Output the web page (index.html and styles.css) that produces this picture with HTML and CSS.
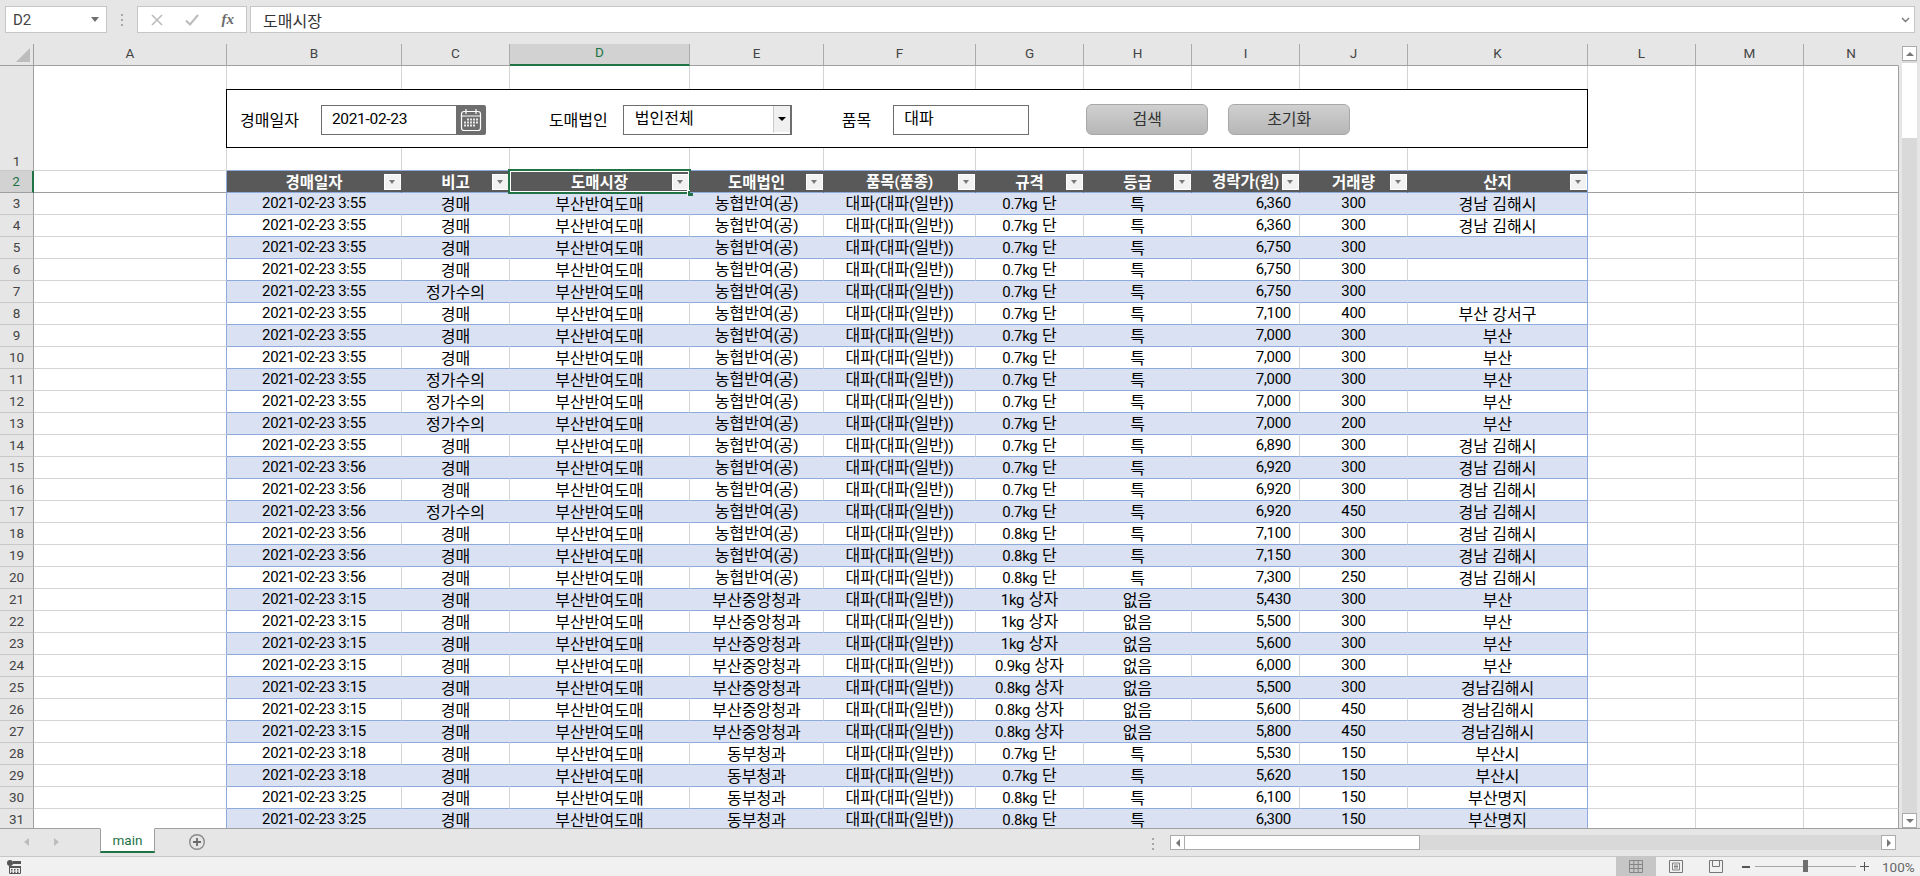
FILE: index.html
```html
<!DOCTYPE html>
<html lang="ko">
<head>
<meta charset="utf-8">
<title>main</title>
<link rel="stylesheet" href="styles.css">
</head>
<body>
<header class="fbar">
  <div class="namebox"><span>D2</span><i class="tri"></i></div>
  <div class="dots"><i></i><i></i><i></i></div>
  <div class="fnbtns">
    <svg class="ic" width="12" height="12" viewBox="0 0 12 12"><path d="M1 1l10 10M11 1L1 11" stroke="#bcbcbc" stroke-width="1.6" fill="none"/></svg>
    <svg class="ic" width="14" height="12" viewBox="0 0 14 12"><path d="M1 6.500l4 4L13 1" stroke="#bcbcbc" stroke-width="2" fill="none"/></svg>
    <span class="fx">fx</span>
  </div>
  <div class="formula"><span>도매시장</span>
    <svg width="9" height="6" viewBox="0 0 9 6"><path d="M1 1l3.500 3.500L8 1" stroke="#777" stroke-width="1.400" fill="none"/></svg>
  </div>
</header>
<main class="main">
  <div class="sheet">
    <table class="grid">
      <colgroup>
        <col class="w34"><col class="w193"><col class="w175"><col class="w108"><col class="w180"><col class="w134"><col class="w152"><col class="w108"><col class="w108"><col class="w108"><col class="w108"><col class="w180"><col class="w108"><col class="w108"><col class="w95">
      </colgroup>
      <thead>
        <tr class="cols">
          <th class="corner"><svg width="14" height="14" viewBox="0 0 14 14"><path d="M14 0v14H0z" fill="#bdbdbd"/></svg></th>
          <th>A</th><th>B</th><th>C</th><th class="cur">D</th><th>E</th><th>F</th><th>G</th><th>H</th><th>I</th><th>J</th><th>K</th><th>L</th><th>M</th><th class="last">N</th>
        </tr>
        <tr class="r1">
          <th class="rh">1</th><td></td><td></td><td></td><td></td><td></td><td></td><td></td><td></td><td></td><td></td><td></td><td></td><td></td><td class="edge"></td>
        </tr>
        <tr class="r2">
          <th class="rh cur">2</th><td class="tl"></td>
          <th class="hd">경매일자<i class="fb"></i></th>
          <th class="hd">비고<i class="fb"></i></th>
          <th class="hd sel">도매시장<i class="fb"></i><i class="selbox"></i><i class="handle"></i></th>
          <th class="hd">도매법인<i class="fb"></i></th>
          <th class="hd">품목<b>(</b>품종<b>)</b><i class="fb"></i></th>
          <th class="hd">규격<i class="fb"></i></th>
          <th class="hd">등급<i class="fb"></i></th>
          <th class="hd">경락가<b>(</b>원<b>)</b><i class="fb"></i></th>
          <th class="hd">거래량<i class="fb"></i></th>
          <th class="hd tr">산지<i class="fb"></i></th>
          <td></td><td></td><td class="edge"></td>
        </tr>
      </thead>
      <tbody>
        <tr><th class="rh">3</th><td></td><td class="l">2021-02-23 3:55</td><td>경매</td><td>부산반여도매</td><td>농협반여<span class="l">(</span>공<span class="l">)</span></td><td>대파<span class="l">(</span>대파<span class="l">(</span>일반<span class="l">))</span></td><td><span class="l">0.7kg</span> 단</td><td>특</td><td class="l p">6,360</td><td class="l">300</td><td>경남 김해시</td><td></td><td></td><td class="edge"></td></tr>
        <tr><th class="rh">4</th><td></td><td class="l">2021-02-23 3:55</td><td>경매</td><td>부산반여도매</td><td>농협반여<span class="l">(</span>공<span class="l">)</span></td><td>대파<span class="l">(</span>대파<span class="l">(</span>일반<span class="l">))</span></td><td><span class="l">0.7kg</span> 단</td><td>특</td><td class="l p">6,360</td><td class="l">300</td><td>경남 김해시</td><td></td><td></td><td class="edge"></td></tr>
        <tr><th class="rh">5</th><td></td><td class="l">2021-02-23 3:55</td><td>경매</td><td>부산반여도매</td><td>농협반여<span class="l">(</span>공<span class="l">)</span></td><td>대파<span class="l">(</span>대파<span class="l">(</span>일반<span class="l">))</span></td><td><span class="l">0.7kg</span> 단</td><td>특</td><td class="l p">6,750</td><td class="l">300</td><td></td><td></td><td></td><td class="edge"></td></tr>
        <tr><th class="rh">6</th><td></td><td class="l">2021-02-23 3:55</td><td>경매</td><td>부산반여도매</td><td>농협반여<span class="l">(</span>공<span class="l">)</span></td><td>대파<span class="l">(</span>대파<span class="l">(</span>일반<span class="l">))</span></td><td><span class="l">0.7kg</span> 단</td><td>특</td><td class="l p">6,750</td><td class="l">300</td><td></td><td></td><td></td><td class="edge"></td></tr>
        <tr><th class="rh">7</th><td></td><td class="l">2021-02-23 3:55</td><td>정가수의</td><td>부산반여도매</td><td>농협반여<span class="l">(</span>공<span class="l">)</span></td><td>대파<span class="l">(</span>대파<span class="l">(</span>일반<span class="l">))</span></td><td><span class="l">0.7kg</span> 단</td><td>특</td><td class="l p">6,750</td><td class="l">300</td><td></td><td></td><td></td><td class="edge"></td></tr>
        <tr><th class="rh">8</th><td></td><td class="l">2021-02-23 3:55</td><td>경매</td><td>부산반여도매</td><td>농협반여<span class="l">(</span>공<span class="l">)</span></td><td>대파<span class="l">(</span>대파<span class="l">(</span>일반<span class="l">))</span></td><td><span class="l">0.7kg</span> 단</td><td>특</td><td class="l p">7,100</td><td class="l">400</td><td>부산 강서구</td><td></td><td></td><td class="edge"></td></tr>
        <tr><th class="rh">9</th><td></td><td class="l">2021-02-23 3:55</td><td>경매</td><td>부산반여도매</td><td>농협반여<span class="l">(</span>공<span class="l">)</span></td><td>대파<span class="l">(</span>대파<span class="l">(</span>일반<span class="l">))</span></td><td><span class="l">0.7kg</span> 단</td><td>특</td><td class="l p">7,000</td><td class="l">300</td><td>부산</td><td></td><td></td><td class="edge"></td></tr>
        <tr><th class="rh">10</th><td></td><td class="l">2021-02-23 3:55</td><td>경매</td><td>부산반여도매</td><td>농협반여<span class="l">(</span>공<span class="l">)</span></td><td>대파<span class="l">(</span>대파<span class="l">(</span>일반<span class="l">))</span></td><td><span class="l">0.7kg</span> 단</td><td>특</td><td class="l p">7,000</td><td class="l">300</td><td>부산</td><td></td><td></td><td class="edge"></td></tr>
        <tr><th class="rh">11</th><td></td><td class="l">2021-02-23 3:55</td><td>정가수의</td><td>부산반여도매</td><td>농협반여<span class="l">(</span>공<span class="l">)</span></td><td>대파<span class="l">(</span>대파<span class="l">(</span>일반<span class="l">))</span></td><td><span class="l">0.7kg</span> 단</td><td>특</td><td class="l p">7,000</td><td class="l">300</td><td>부산</td><td></td><td></td><td class="edge"></td></tr>
        <tr><th class="rh">12</th><td></td><td class="l">2021-02-23 3:55</td><td>정가수의</td><td>부산반여도매</td><td>농협반여<span class="l">(</span>공<span class="l">)</span></td><td>대파<span class="l">(</span>대파<span class="l">(</span>일반<span class="l">))</span></td><td><span class="l">0.7kg</span> 단</td><td>특</td><td class="l p">7,000</td><td class="l">300</td><td>부산</td><td></td><td></td><td class="edge"></td></tr>
        <tr><th class="rh">13</th><td></td><td class="l">2021-02-23 3:55</td><td>정가수의</td><td>부산반여도매</td><td>농협반여<span class="l">(</span>공<span class="l">)</span></td><td>대파<span class="l">(</span>대파<span class="l">(</span>일반<span class="l">))</span></td><td><span class="l">0.7kg</span> 단</td><td>특</td><td class="l p">7,000</td><td class="l">200</td><td>부산</td><td></td><td></td><td class="edge"></td></tr>
        <tr><th class="rh">14</th><td></td><td class="l">2021-02-23 3:55</td><td>경매</td><td>부산반여도매</td><td>농협반여<span class="l">(</span>공<span class="l">)</span></td><td>대파<span class="l">(</span>대파<span class="l">(</span>일반<span class="l">))</span></td><td><span class="l">0.7kg</span> 단</td><td>특</td><td class="l p">6,890</td><td class="l">300</td><td>경남 김해시</td><td></td><td></td><td class="edge"></td></tr>
        <tr><th class="rh">15</th><td></td><td class="l">2021-02-23 3:56</td><td>경매</td><td>부산반여도매</td><td>농협반여<span class="l">(</span>공<span class="l">)</span></td><td>대파<span class="l">(</span>대파<span class="l">(</span>일반<span class="l">))</span></td><td><span class="l">0.7kg</span> 단</td><td>특</td><td class="l p">6,920</td><td class="l">300</td><td>경남 김해시</td><td></td><td></td><td class="edge"></td></tr>
        <tr><th class="rh">16</th><td></td><td class="l">2021-02-23 3:56</td><td>경매</td><td>부산반여도매</td><td>농협반여<span class="l">(</span>공<span class="l">)</span></td><td>대파<span class="l">(</span>대파<span class="l">(</span>일반<span class="l">))</span></td><td><span class="l">0.7kg</span> 단</td><td>특</td><td class="l p">6,920</td><td class="l">300</td><td>경남 김해시</td><td></td><td></td><td class="edge"></td></tr>
        <tr><th class="rh">17</th><td></td><td class="l">2021-02-23 3:56</td><td>정가수의</td><td>부산반여도매</td><td>농협반여<span class="l">(</span>공<span class="l">)</span></td><td>대파<span class="l">(</span>대파<span class="l">(</span>일반<span class="l">))</span></td><td><span class="l">0.7kg</span> 단</td><td>특</td><td class="l p">6,920</td><td class="l">450</td><td>경남 김해시</td><td></td><td></td><td class="edge"></td></tr>
        <tr><th class="rh">18</th><td></td><td class="l">2021-02-23 3:56</td><td>경매</td><td>부산반여도매</td><td>농협반여<span class="l">(</span>공<span class="l">)</span></td><td>대파<span class="l">(</span>대파<span class="l">(</span>일반<span class="l">))</span></td><td><span class="l">0.8kg</span> 단</td><td>특</td><td class="l p">7,100</td><td class="l">300</td><td>경남 김해시</td><td></td><td></td><td class="edge"></td></tr>
        <tr><th class="rh">19</th><td></td><td class="l">2021-02-23 3:56</td><td>경매</td><td>부산반여도매</td><td>농협반여<span class="l">(</span>공<span class="l">)</span></td><td>대파<span class="l">(</span>대파<span class="l">(</span>일반<span class="l">))</span></td><td><span class="l">0.8kg</span> 단</td><td>특</td><td class="l p">7,150</td><td class="l">300</td><td>경남 김해시</td><td></td><td></td><td class="edge"></td></tr>
        <tr><th class="rh">20</th><td></td><td class="l">2021-02-23 3:56</td><td>경매</td><td>부산반여도매</td><td>농협반여<span class="l">(</span>공<span class="l">)</span></td><td>대파<span class="l">(</span>대파<span class="l">(</span>일반<span class="l">))</span></td><td><span class="l">0.8kg</span> 단</td><td>특</td><td class="l p">7,300</td><td class="l">250</td><td>경남 김해시</td><td></td><td></td><td class="edge"></td></tr>
        <tr><th class="rh">21</th><td></td><td class="l">2021-02-23 3:15</td><td>경매</td><td>부산반여도매</td><td>부산중앙청과</td><td>대파<span class="l">(</span>대파<span class="l">(</span>일반<span class="l">))</span></td><td><span class="l">1kg</span> 상자</td><td>없음</td><td class="l p">5,430</td><td class="l">300</td><td>부산</td><td></td><td></td><td class="edge"></td></tr>
        <tr><th class="rh">22</th><td></td><td class="l">2021-02-23 3:15</td><td>경매</td><td>부산반여도매</td><td>부산중앙청과</td><td>대파<span class="l">(</span>대파<span class="l">(</span>일반<span class="l">))</span></td><td><span class="l">1kg</span> 상자</td><td>없음</td><td class="l p">5,500</td><td class="l">300</td><td>부산</td><td></td><td></td><td class="edge"></td></tr>
        <tr><th class="rh">23</th><td></td><td class="l">2021-02-23 3:15</td><td>경매</td><td>부산반여도매</td><td>부산중앙청과</td><td>대파<span class="l">(</span>대파<span class="l">(</span>일반<span class="l">))</span></td><td><span class="l">1kg</span> 상자</td><td>없음</td><td class="l p">5,600</td><td class="l">300</td><td>부산</td><td></td><td></td><td class="edge"></td></tr>
        <tr><th class="rh">24</th><td></td><td class="l">2021-02-23 3:15</td><td>경매</td><td>부산반여도매</td><td>부산중앙청과</td><td>대파<span class="l">(</span>대파<span class="l">(</span>일반<span class="l">))</span></td><td><span class="l">0.9kg</span> 상자</td><td>없음</td><td class="l p">6,000</td><td class="l">300</td><td>부산</td><td></td><td></td><td class="edge"></td></tr>
        <tr><th class="rh">25</th><td></td><td class="l">2021-02-23 3:15</td><td>경매</td><td>부산반여도매</td><td>부산중앙청과</td><td>대파<span class="l">(</span>대파<span class="l">(</span>일반<span class="l">))</span></td><td><span class="l">0.8kg</span> 상자</td><td>없음</td><td class="l p">5,500</td><td class="l">300</td><td>경남김해시</td><td></td><td></td><td class="edge"></td></tr>
        <tr><th class="rh">26</th><td></td><td class="l">2021-02-23 3:15</td><td>경매</td><td>부산반여도매</td><td>부산중앙청과</td><td>대파<span class="l">(</span>대파<span class="l">(</span>일반<span class="l">))</span></td><td><span class="l">0.8kg</span> 상자</td><td>없음</td><td class="l p">5,600</td><td class="l">450</td><td>경남김해시</td><td></td><td></td><td class="edge"></td></tr>
        <tr><th class="rh">27</th><td></td><td class="l">2021-02-23 3:15</td><td>경매</td><td>부산반여도매</td><td>부산중앙청과</td><td>대파<span class="l">(</span>대파<span class="l">(</span>일반<span class="l">))</span></td><td><span class="l">0.8kg</span> 상자</td><td>없음</td><td class="l p">5,800</td><td class="l">450</td><td>경남김해시</td><td></td><td></td><td class="edge"></td></tr>
        <tr><th class="rh">28</th><td></td><td class="l">2021-02-23 3:18</td><td>경매</td><td>부산반여도매</td><td>동부청과</td><td>대파<span class="l">(</span>대파<span class="l">(</span>일반<span class="l">))</span></td><td><span class="l">0.7kg</span> 단</td><td>특</td><td class="l p">5,530</td><td class="l">150</td><td>부산시</td><td></td><td></td><td class="edge"></td></tr>
        <tr><th class="rh">29</th><td></td><td class="l">2021-02-23 3:18</td><td>경매</td><td>부산반여도매</td><td>동부청과</td><td>대파<span class="l">(</span>대파<span class="l">(</span>일반<span class="l">))</span></td><td><span class="l">0.7kg</span> 단</td><td>특</td><td class="l p">5,620</td><td class="l">150</td><td>부산시</td><td></td><td></td><td class="edge"></td></tr>
        <tr><th class="rh">30</th><td></td><td class="l">2021-02-23 3:25</td><td>경매</td><td>부산반여도매</td><td>동부청과</td><td>대파<span class="l">(</span>대파<span class="l">(</span>일반<span class="l">))</span></td><td><span class="l">0.8kg</span> 단</td><td>특</td><td class="l p">6,100</td><td class="l">150</td><td>부산명지</td><td></td><td></td><td class="edge"></td></tr>
        <tr><th class="rh">31</th><td></td><td class="l">2021-02-23 3:25</td><td>경매</td><td>부산반여도매</td><td>동부청과</td><td>대파<span class="l">(</span>대파<span class="l">(</span>일반<span class="l">))</span></td><td><span class="l">0.8kg</span> 단</td><td>특</td><td class="l p">6,300</td><td class="l">150</td><td>부산명지</td><td></td><td></td><td class="edge"></td></tr>
      </tbody>
    </table>
    <form class="panel">
      <label class="lab lab1">경매일자</label>
      <div class="date">
        <span class="dateval">2021-02-23</span>
        <span class="cal">
          <svg width="22" height="24" viewBox="0 0 22 24"><rect x="1.500" y="3.500" width="19" height="19" rx="2.500" fill="none" stroke="#fff" stroke-width="1.200"/><path d="M6 1v5M16 1v5M9 3.500h4M2 8h18" stroke="#fff" stroke-width="1.200" fill="none"/><path d="M7 10.500h2v2H7zM10 10.500h2v2h-2zM13 10.500h2v2h-2zM16 10.500h2v2h-2zM4 13.500h2v2H4zM7 13.500h2v2H7zM10 13.500h2v2h-2zM13 13.500h2v2h-2zM16 13.500h2v2h-2zM4 16.500h2v2H4zM7 16.500h2v2H7zM10 16.500h2v2h-2zM13 16.500h2v2h-2z" fill="#e8e8e8"/></svg>
        </span>
      </div>
      <label class="lab lab2">도매법인</label>
      <div class="combo"><span>법인전체</span><i class="cbtn"><i></i></i></div>
      <label class="lab lab3">품목</label>
      <div class="item"><span>대파</span></div>
      <button class="btn btn1" type="button">검색</button>
      <button class="btn btn2" type="button">초기화</button>
    </form>
  </div>
  <aside class="vscroll">
    <div class="sb up"><i></i></div>
    <div class="vthumb"></div>
    <div class="sb down"><i></i></div>
  </aside>
</main>
<section class="tabs">
  <i class="ar left"></i><i class="ar right"></i>
  <div class="tab">main</div>
  <svg class="plus" width="18" height="18" viewBox="0 0 18 18"><circle cx="9" cy="9" r="7.300" fill="none" stroke="#8a8a8a" stroke-width="1.400"/><path d="M9 5v8M5 9h8" stroke="#6a6a6a" stroke-width="1.800"/></svg>
  <div class="hdots"><i></i><i></i><i></i></div>
  <div class="hscroll">
    <div class="sb hl"><i></i></div>
    <div class="hthumb"></div>
    <div class="sb hr"><i></i></div>
  </div>
</section>
<footer class="status">
  <svg class="macro" width="14" height="14" viewBox="0 0 14 14"><circle cx="3" cy="3" r="3" fill="#555"/><path d="M6 1h8v3H6zM2 6h12v2H2z" fill="#555"/><path d="M2.500 6.500h11v7h-11z" fill="none" stroke="#555"/><path d="M4 9h1.500v1.500H4zM7 9h1.500v1.500H7zM10 9h1.500v1.500H10zM4 11.500h1.500V13H4zM7 11.500h1.500V13H7zM10 11.500h1.500V13H10z" fill="#555"/></svg>
  <div class="views">
    <span class="view on"><svg width="14" height="13" viewBox="0 0 14 13"><path d="M.5.500h13v12H.5zM.5 4.500h13M.5 8.500h13M4.800.500v12M9.200.500v12" fill="none" stroke="#868686"/></svg></span>
    <span class="view"><svg width="14" height="13" viewBox="0 0 14 13"><path d="M.5.500h13v12H.5z" fill="none" stroke="#777"/><path d="M3.500 3h7v7h-7zM5 5h4M5 6.500h4M5 8h4" fill="none" stroke="#777" stroke-width=".9"/></svg></span>
    <span class="view"><svg width="14" height="13" viewBox="0 0 14 13"><path d="M.5.500h13v12H.5zM3.500.500v6h7v-6" fill="none" stroke="#777"/></svg></span>
  </div>
  <div class="zoom">
    <i class="zm"></i>
    <div class="slider"><i class="knob"></i></div>
    <i class="zp"></i>
    <span class="pct">100%</span>
  </div>
</footer>
</body>
</html>
```
FILE: styles.css
```css
* { box-sizing: border-box; }
html, body { margin: 0; padding: 0; }
body {
  width: 1920px; height: 876px; overflow: hidden;
  display: flex; flex-direction: column;
  background: #e6e6e6;
  font-family: "Noto Sans CJK KR", "Noto Sans", sans-serif;
  font-size: 16px; color: #000;
}
i { font-style: normal; display: block; }

/* formula bar */
.fbar { height: 44px; flex: none; display: flex; padding: 6px 5px 11px; }
.namebox, .fnbtns, .formula { height: 27px; background: #fff; border: 1px solid #c6c6c6; display: flex; align-items: center; }
.namebox { width: 102px; padding: 0 7px; justify-content: space-between; font: 15px Roboto, sans-serif; color: #444; }
.tri { width: 0; height: 0; border: 4px solid transparent; border-top: 5px solid #6f6f6f; border-bottom: 0; }
.dots { width: 30px; display: flex; flex-direction: column; align-items: center; justify-content: center; gap: 3px; }
.dots i, .hdots i { width: 2px; height: 2px; background: #a6a6a6; }
.fnbtns { width: 110px; padding: 0 10px 0 13px; justify-content: space-between; }
.fx { font: italic bold 15px "Liberation Serif", serif; color: #6b6b6b; margin-right: 2px; }
.formula { flex: 1; margin-left: 3px; padding: 0 4px 0 12px; justify-content: space-between; color: #333; }

/* sheet */
.main { height: 784px; flex: none; display: flex; }
.sheet { width: 1899px; height: 784px; overflow: hidden; position: relative; background: #fff; flex: none; }
.grid { border-collapse: separate; border-spacing: 0; table-layout: fixed; width: 1899px; }
.w34 { width: 34px; } .w193 { width: 193px; } .w175 { width: 175px; } .w108 { width: 108px; }
.w180 { width: 180px; } .w134 { width: 134px; } .w152 { width: 152px; } .w95 { width: 95px; }
.grid th, .grid td {
  padding: 0; height: 22px; line-height: 17px; text-align: center; white-space: nowrap;
  border-right: 1px solid #d4d4d4; border-bottom: 1px solid #d4d4d4; font-weight: 400;
}
.grid .l { font-family: Roboto, sans-serif; font-size: 15px; letter-spacing: -0.3px; }
.grid .p { text-align: right; padding-right: 8px; }

.cols th {
  background: #e6e6e6; color: #444; font: 13.500px/17px Roboto, sans-serif;
  border-right-color: #ababab; border-bottom: 1px solid #9f9f9f; padding-bottom: 3px; vertical-align: middle;
}
.cols .corner { padding: 4px 3px 0 0; text-align: right; vertical-align: top; border-right-color: #9f9f9f; }
.cols .corner svg { display: block; margin-left: auto; }
.cols .cur { background: #d2d2d2; color: #217346; border-bottom: 2px solid #217346; }
.cols .last { border-right-color: #e6e6e6; }

.grid .rh {
  background: #e6e6e6; color: #444; font: 13.500px/17px Roboto, sans-serif;
  border-right: 1px solid #9f9f9f; border-bottom-color: #c8c8c8;
}
.r1 th, .r1 td { height: 105px; }
.r1 .rh { vertical-align: bottom; }
.grid .rh.cur { background: #d2d2d2; color: #217346; border-right: 2px solid #217346; border-bottom-color: #9f9f9f; }
.edge { border-right-color: #9f9f9f !important; }
.tl { border-right-color: #8ea9db !important; }
.grid .tr { border-right-color: #8ea9db; }
.r1 td:nth-child(n+3):nth-child(-n+12) { border-bottom-color: #8ea9db; }
.r2 td { border-bottom-color: #9f9f9f; }
.grid .hd {
  position: relative; background: #595959; color: #fff; font-weight: 700; font-size: 15.500px;
  border-right-color: #595959; border-bottom-color: #8ea9db;
}
.grid .hd.tr { border-right-color: #8ea9db; }
.hd b { font: 700 14.500px Roboto, sans-serif; }
.fb { position: absolute; right: 0; top: 3px; width: 17px; height: 16px; background: #f2f2f2; border: 1px solid #fff; }
.fb::after { content: ""; position: absolute; left: 4px; top: 5px; border: 3.500px solid transparent; border-top: 4px solid #7a7a7a; border-bottom: 0; }
.selbox { position: absolute; left: -2px; right: -2px; top: -2px; bottom: -2px; border: 2px solid #217346; outline: 1px solid #fff; outline-offset: -3px; }
.handle { position: absolute; right: -4px; bottom: -4px; width: 6px; height: 6px; background: #217346; border: 1px solid #fff; border-width: 1px 0 0 1px; }

tbody td:nth-child(n+3):nth-child(-n+12) { border-bottom-color: #8ea9db; }
tbody td:nth-child(2) { border-right-color: #8ea9db; }
tbody td:nth-child(12) { border-right-color: #8ea9db; }
tbody tr:nth-child(odd) td:nth-child(n+3):nth-child(-n+11) { background: #d9e1f2; border-right-color: #d9e1f2; }
tbody tr:nth-child(odd) td:nth-child(12) { background: #d9e1f2; }

/* search panel floating over row 1 */
.panel {
  position: absolute; left: 226px; top: 45px; width: 1362px; height: 59px;
  border: 1px solid #000; background: #fff; padding-top: 15px;
  display: flex; align-items: flex-start;
}
.lab { line-height: 28px; height: 30px; }
.lab1 { margin-left: 13px; }
.date { width: 165px; height: 30px; margin-left: 22px; display: flex; }
.dateval { flex: 1; border: 1px solid #6e6e6e; border-right: 0; padding-left: 10px; font: 15.500px/27px Roboto, sans-serif; letter-spacing: -0.3px; }
.cal { width: 30px; background: #6e6e6e; border-radius: 0 2px 2px 0; display: flex; align-items: center; justify-content: center; }
.lab2 { margin-left: 63px; }
.combo { width: 169px; height: 30px; margin-left: 15px; border: 1px solid #6e6e6e; border-right-width: 2px; padding-left: 11px; line-height: 23px; display: flex; justify-content: space-between; }
.cbtn { width: 17px; height: 27px; background: #f0f0f0; border-left: 1px solid #c8c8c8; border-bottom: 1px solid #fff; display: flex; align-items: center; justify-content: center; }
.cbtn i { border: 4px solid transparent; border-top: 4px solid #000; border-bottom: 0; }
.lab3 { margin-left: 50px; }
.item { width: 136px; height: 30px; margin-left: 22px; border: 1px solid #6e6e6e; padding-left: 10px; line-height: 22px; }
.btn {
  width: 122px; height: 31px; margin-top: -1px; padding: 0 0 4px;
  border: 1px solid #a8a8a8; border-radius: 6px;
  background: linear-gradient(#d0d0d0, #b6b6b6); color: #333;
  font: 16px/24px "Noto Sans CJK KR", sans-serif;
}
.btn1 { margin-left: 57px; }
.btn2 { margin-left: 20px; }

/* scrollbars */
.vscroll { width: 21px; flex: none; display: flex; flex-direction: column; padding: 2px 3px 0 3px; }
.sb { background: #fff; border: 1px solid #ababab; display: flex; align-items: center; justify-content: center; flex: none; }
.up, .down { width: 15px; height: 15px; }
.up i { border: 4px solid transparent; border-bottom: 4px solid #777; border-top: 0; }
.down i { border: 4px solid transparent; border-top: 4px solid #777; border-bottom: 0; }
.vthumb { width: 15px; flex: 1; background: linear-gradient(#fff, #fff) 0 1px / 100% 75px no-repeat #d9d9d9; border-top: 1px solid #d9d9d9; }

/* sheet tabs */
.tabs { height: 28px; flex: none; border-top: 1px solid #9f9f9f; display: flex; align-items: flex-start; position: relative; }
.ar { border: 4px solid transparent; margin-top: 9px; }
.ar.left { margin-left: 24px; border-right: 5px solid #bcbcbc; border-left: 0; }
.ar.right { margin-left: 25px; border-left: 5px solid #bcbcbc; border-right: 0; }
.tab {
  width: 55px; height: 25px; margin-left: 41px; margin-top: -1px; background: #fff;
  border: 1px solid #9f9f9f; border-top-color: #fff; border-bottom: 2px solid #217346;
  color: #217346; text-align: center; font: 13.500px/23px Roboto, sans-serif;
}
.plus { margin: 4px 0 0 33px; }
.hdots { margin: 9px 0 0 946px; width: 2px; display: flex; flex-direction: column; gap: 3px; }
.hscroll { margin: 6px 0 0 16px; width: 726px; height: 15px; display: flex; background: #d9d9d9; }
.hl, .hr { width: 15px; height: 15px; }
.hl i { border: 4px solid transparent; border-right: 4px solid #777; border-left: 0; }
.hr i { border: 4px solid transparent; border-left: 4px solid #777; border-right: 0; }
.hr { margin-left: auto; }
.hthumb { width: 235px; height: 15px; background: #fff; border: 1px solid #ababab; border-left: 0; }

/* status bar */
.status { height: 20px; flex: none; background: #f1f1f1; border-top: 1px solid #c6c6c6; display: flex; align-items: center; }
.macro { margin-left: 7px; }
.views { margin-left: 1595px; display: flex; height: 19px; }
.view { width: 40px; display: flex; align-items: center; justify-content: center; }
.view.on { background: #c6c6c6; }
.zoom { margin-left: 6px; display: flex; align-items: center; color: #555; }
.zm { width: 8px; height: 2px; background: #555; }
.slider { width: 101px; height: 1px; margin: 0 4px 0 5px; background: #a6a6a6; position: relative; }
.knob { position: absolute; left: 48px; top: -6px; width: 5px; height: 12px; background: #6e6e6e; }
.zp { width: 9px; height: 9px; background: linear-gradient(#555, #555) center / 100% 1px no-repeat, linear-gradient(#555, #555) center / 1px 100% no-repeat; }
.pct { margin-left: 13px; font: 13.500px Roboto, sans-serif; color: #666; }
```
